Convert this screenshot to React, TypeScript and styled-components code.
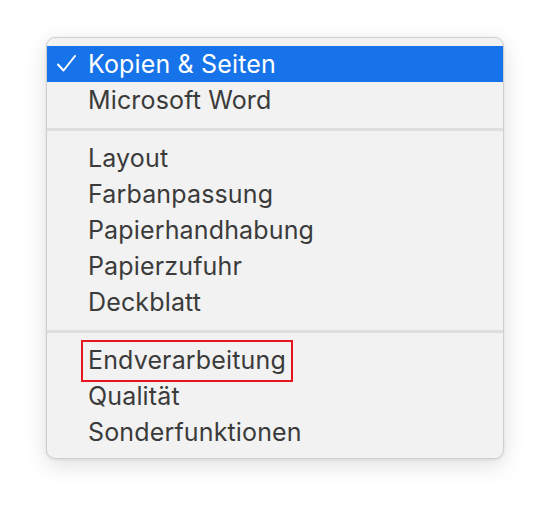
import styled, { createGlobalStyle } from "styled-components";

const GlobalStyle = createGlobalStyle`
  html, body {
    margin: 0;
    padding: 0;
    background: #ffffff;
  }
  body {
    font-family: Inter, "Noto Sans", "Liberation Sans", sans-serif;
    -webkit-font-smoothing: antialiased;
  }
`;

const Page = styled.div`
  width: 550px;
  height: 513px;
  box-sizing: border-box;
  padding: 37px 46px 0 46px;
  background: #ffffff;
`;

const Menu = styled.div`
  box-sizing: border-box;
  width: 458px;
  height: 422px;
  padding: 8px 0 10px 0;
  background: #f2f2f2;
  border: 1px solid #cfcfcf;
  border-radius: 9px;
  box-shadow: 0 6px 22px rgba(0, 0, 0, 0.13), 0 1px 3px rgba(0, 0, 0, 0.08);
  display: flex;
  flex-direction: column;
`;

const Row = styled.div<{ $selected?: boolean }>`
  height: 36px;
  display: flex;
  align-items: center;
  padding-left: 41px;
  position: relative;
  font-size: 25px;
  line-height: 30px;
  letter-spacing: 0.15px;
  color: ${(p) => (p.$selected ? "#ffffff" : "#3b3b3b")};
  background: ${(p) => (p.$selected ? "#1673e9" : "transparent")};
`;

const Check = styled.svg`
  position: absolute;
  left: 10px;
  top: 9px;
  width: 19px;
  height: 17px;
`;

const Separator = styled.div`
  height: 22px;
  display: flex;
  align-items: center;

  &::before {
    content: "";
    display: block;
    width: 100%;
    height: 3px;
    background: #dedede;
  }
`;

const Marked = styled.span`
  position: relative;
  display: inline-block;

  &::after {
    content: "";
    position: absolute;
    left: -7px;
    right: -7px;
    top: -5px;
    bottom: -7px;
    border: 2px solid #e5161f;
  }
`;

const groups: string[][] = [
  ["Kopien & Seiten", "Microsoft Word"],
  ["Layout", "Farbanpassung", "Papierhandhabung", "Papierzufuhr", "Deckblatt"],
  ["Endverarbeitung", "Qualität", "Sonderfunktionen"],
];

export default function App() {
  return (
    <>
      <GlobalStyle />
      <Page>
        <Menu>
          {groups.map((items, gi) => (
            <div key={gi}>
              {gi > 0 && <Separator />}
              {items.map((label) => (
                <Row key={label} $selected={label === "Kopien & Seiten"}>
                  {label === "Kopien & Seiten" && (
                    <Check viewBox="0 0 19 17">
                      <path
                        d="M1 9.5 L6.5 15.5 L18 1"
                        fill="none"
                        stroke="#ffffff"
                        strokeWidth="2"
                        strokeLinecap="round"
                        strokeLinejoin="round"
                      />
                    </Check>
                  )}
                  {label === "Endverarbeitung" ? <Marked>{label}</Marked> : label}
                </Row>
              ))}
            </div>
          ))}
        </Menu>
      </Page>
    </>
  );
}
